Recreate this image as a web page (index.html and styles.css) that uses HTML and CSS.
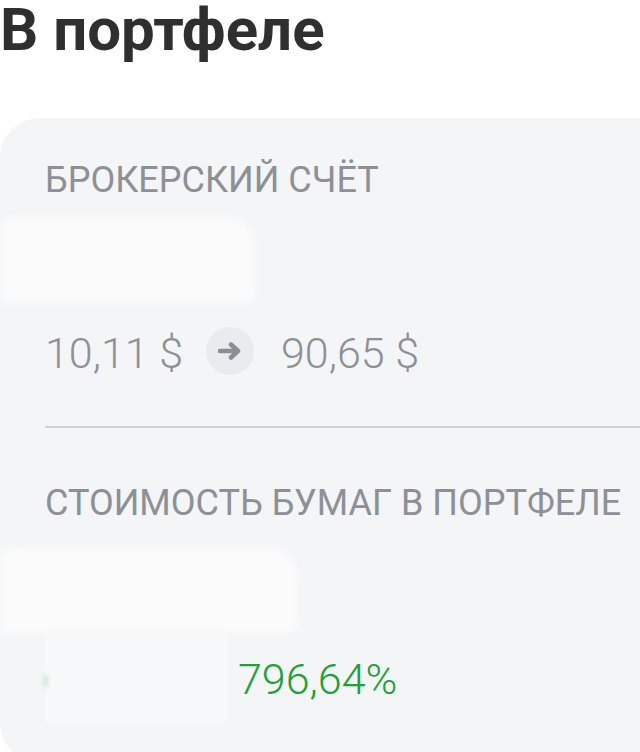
FILE: index.html
```html
<!DOCTYPE html>
<html lang="ru">
<head>
    <meta charset="UTF-8">
    <meta name="viewport" content="width=device-width, initial-scale=1.0">
    <title>В портфеле</title>
    <link rel="stylesheet" href="styles.css">
</head>
<body>

    <h1 class="title">В портфеле</h1>

    <div class="card">
        <!-- Broker account -->
        <p class="label">БРОКЕРСКИЙ СЧЁТ</p>
        <div class="hidden-value"></div>

        <div class="change">
            <span class="amount">10,11 $</span>
            <span class="arrow">
                <svg width="24" height="18" viewBox="0 0 24 18">
                    <path d="M2 9h18M13 2.5l7 6.5-7 6.5" fill="none" stroke="#8b8e94" stroke-width="4.5" stroke-linecap="round" stroke-linejoin="round"/>
                </svg>
            </span>
            <span class="amount">90,65 $</span>
        </div>

        <hr class="divider">

        <!-- Securities -->
        <p class="label label-second">СТОИМОСТЬ БУМАГ В ПОРТФЕЛЕ</p>
        <div class="hidden-value hidden-wide"></div>

        <div class="profit">
            <div class="hidden-small"><span class="leftover"></span></div>
            <span class="percent">796,64%</span>
        </div>
    </div>

</body>
</html>
```

FILE: styles.css
```css
body {
    font-family: Roboto, "Liberation Sans", sans-serif;
    background-color: #ffffff;
    margin: 0;
    padding: 0;
    overflow: hidden;
}
.title {
    font-size: 60px;
    line-height: 56px;
    font-weight: 700;
    color: #2f2f2f;
    margin: 2px 0 60px 0;
}
.card {
    background: #f3f5f7;
    border-radius: 40px 0 0 40px;
    height: 645px;
    padding: 44px 0 0 45px;
    box-sizing: border-box;
}
.label {
    font-size: 36px;
    line-height: 36px;
    font-weight: 400;
    color: #8d9096;
    margin: 0;
    white-space: nowrap;
}
.hidden-value {
    margin: 19px 0 0 -45px;
    width: 255px;
    height: 86px;
    background: #fbfbfc;
    border-radius: 16px 30px 6px 4px;
    filter: blur(3px);
}
.hidden-wide {
    width: 297px;
    margin-top: 26px;
}
.change {
    display: flex;
    align-items: center;
    gap: 23px;
    margin-top: 24px;
    height: 48px;
}
.amount {
    font-size: 43px;
    line-height: 48px;
    font-weight: 300;
    color: #8d9096;
    position: relative;
    top: 2px;
}
.arrow {
    width: 48px;
    height: 48px;
    border-radius: 50%;
    background: #e9ebee;
    display: flex;
    align-items: center;
    justify-content: center;
    margin-right: 4px;
}
.divider {
    border: none;
    border-top: 2px solid #cfd1d5;
    margin: 51px 0 0 0;
}
.label-second {
    margin-top: 57px;
}
.profit {
    display: flex;
    gap: 10px;
}
.hidden-small {
    width: 183px;
    height: 90px;
    background: #f7f8f9;
    filter: blur(2px);
    display: flex;
    align-items: center;
}
.leftover {
    width: 2px;
    height: 12px;
    margin-top: 6px;
    background: #a8d8b3;
}
.percent {
    font-size: 43px;
    line-height: 48px;
    font-weight: 300;
    color: #21a038;
    margin-top: 22px;
}
```
